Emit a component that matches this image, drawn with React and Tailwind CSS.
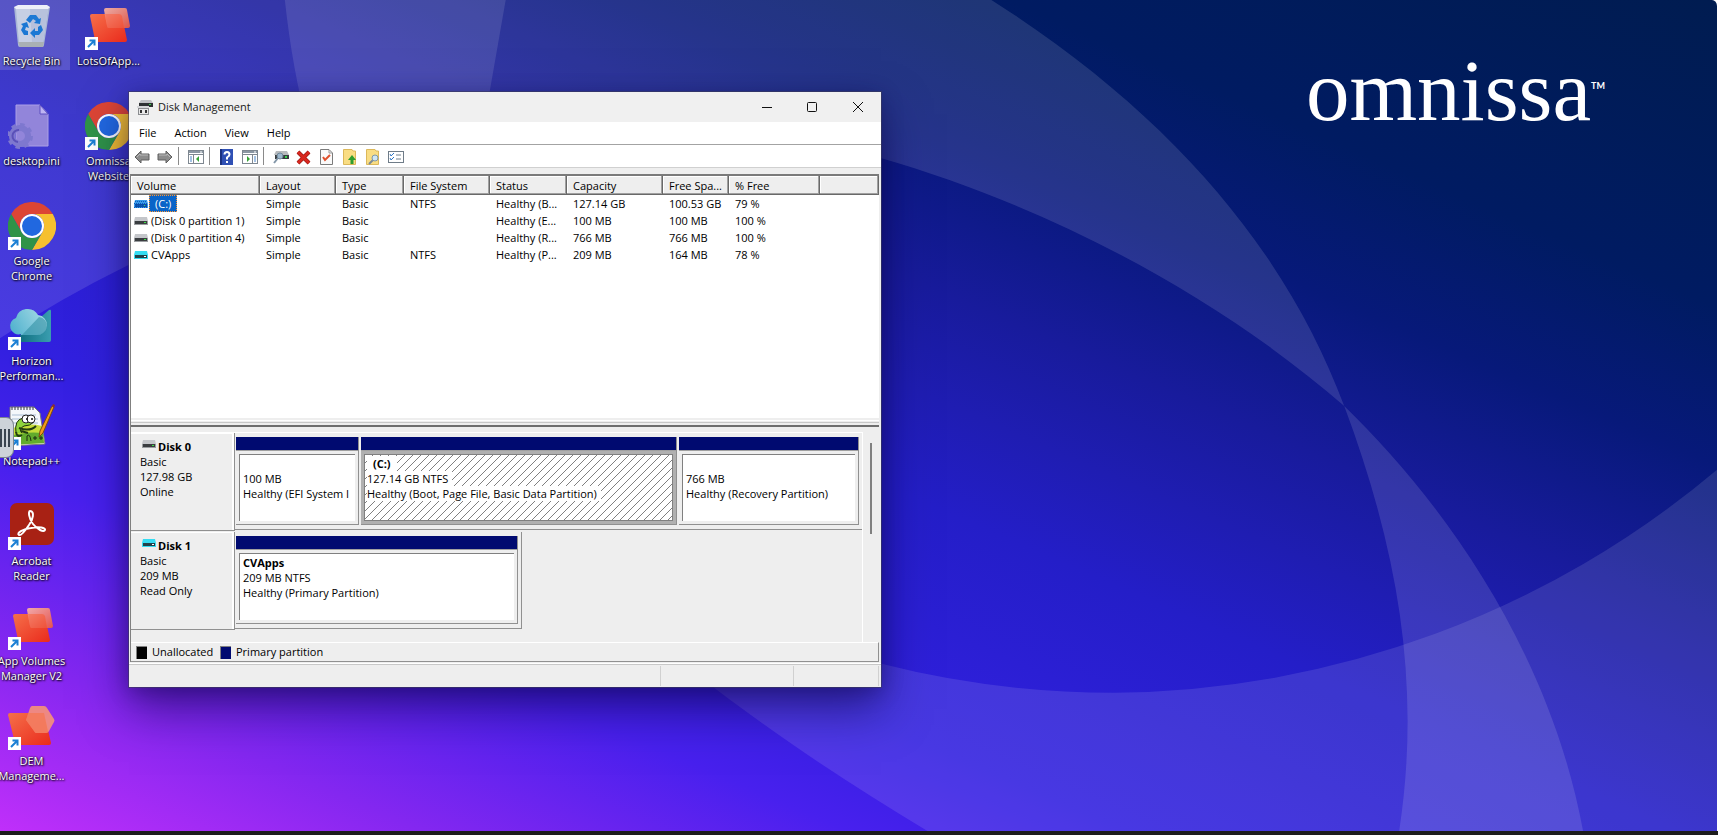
import { useState } from "react";

const volumes = [
  { name: "(C:)", icon: "hatched", fs: "NTFS", status: "Healthy (B...", capacity: "127.14 GB", free: "100.53 GB", pct: "79 %", selected: true },
  { name: "(Disk 0 partition 1)", icon: "gray", fs: "", status: "Healthy (E...", capacity: "100 MB", free: "100 MB", pct: "100 %" },
  { name: "(Disk 0 partition 4)", icon: "gray", fs: "", status: "Healthy (R...", capacity: "766 MB", free: "766 MB", pct: "100 %" },
  { name: "CVApps", icon: "cyan", fs: "NTFS", status: "Healthy (P...", capacity: "209 MB", free: "164 MB", pct: "78 %" },
];

const columns = [
  { label: "Volume", width: "w-[129px]" },
  { label: "Layout", width: "w-[76px]" },
  { label: "Type", width: "w-[68px]" },
  { label: "File System", width: "w-[86px]" },
  { label: "Status", width: "w-[77px]" },
  { label: "Capacity", width: "w-[96px]" },
  { label: "Free Spa...", width: "w-[66px]" },
  { label: "% Free", width: "w-[91px]" },
  { label: "", width: "" },
];

/* ---------- wallpaper ---------- */

function Wallpaper() {
  return (
    <svg
      className="absolute inset-0 h-full w-full"
      viewBox="0 0 1718 835"
      preserveAspectRatio="none"
      aria-hidden="true"
    >
      <defs>
        <linearGradient id="sky" gradientUnits="userSpaceOnUse" x1="0" y1="835" x2="582" y2="-504">
          <stop offset="0" stopColor="#c02ffa" />
          <stop offset="0.115" stopColor="#8427f0" />
          <stop offset="0.232" stopColor="#4820ee" />
          <stop offset="0.308" stopColor="#3220e0" />
          <stop offset="0.459" stopColor="#241ec8" />
          <stop offset="0.528" stopColor="#1f1db2" />
          <stop offset="0.597" stopColor="#181b9c" />
          <stop offset="0.7" stopColor="#07197a" />
          <stop offset="0.8" stopColor="#001b62" />
          <stop offset="1" stopColor="#001c50" />
        </linearGradient>
      </defs>
      <rect width="1718" height="835" fill="url(#sky)" />
      <path
        fill="#fff"
        fillOpacity="0.12"
        fillRule="evenodd"
        d="M0 0H992C1180 120 1290 260 1345 408S1422 690 1400 835H0Z
           M0 340Q60 300 129 266C380 110 640 80 882 159C1040 205 1210 290 1345 408C1440 500 1550 650 1584 835H0Z"
      />
      <path
        fill="#fff"
        fillOpacity="0.11"
        d="M285 0C320 330 520 590 928 835H1718V472A945 945 0 0 1 1115 696Q995 696 882 667C640 590 440 400 490 92L506 0Z"
      />
    </svg>
  );
}

/* ---------- desktop icons ---------- */

function ShortcutArrow() {
  return (
    <g>
      <rect x="0" y="35" width="13" height="13" fill="#fff" />
      <path d="M3 45L9 39M4.5 38.5H9.5V43.5" fill="none" stroke="#1a7fd4" strokeWidth="2" />
    </g>
  );
}

function RecycleBin() {
  return (
    <svg width="48" height="48" viewBox="0 0 48 48">
      <path d="M6 5L10 43Q10 45 12 45H34Q36 45 36 43L42 5Z" fill="#a9b6d6" />
      <path d="M8 7H40L35 40H11Z" fill="#c6cfe4" />
      <path d="M22 7H40L35 40H24Z" fill="#b7c1dc" />
      <path d="M6 5L10 3H39L42 5L40 7H8Z" fill="#eceff8" />
      <path d="M10 40H36L35 45H12Z" fill="#a9b0b4" />
      <g fill="#1c78d4">
        <path d="M18 18L22 13H28L31 17L33 16L32 22L26 21L28 19L25 17L22 21Z" />
        <path d="M33 23L35 28L31 33H27V36L22 31L27 26V29L30 29L30 25Z" />
        <path d="M20 33H16L13 28L15 24L13 22L19 20L21 26L18 25L17 28L20 29Z" />
      </g>
    </svg>
  );
}

function AppVolumes() {
  return (
    <svg width="48" height="48" viewBox="0 0 48 48">
      <defs>
        <linearGradient id="avBack" x1="0" y1="0" x2="1" y2="1">
          <stop offset="0" stopColor="#f5704a" />
          <stop offset="1" stopColor="#ea2a1c" />
        </linearGradient>
        <linearGradient id="avFront" x1="0" y1="0" x2="1" y2="1">
          <stop offset="0" stopColor="#ffb9a4" />
          <stop offset="1" stopColor="#f0573c" />
        </linearGradient>
      </defs>
      <path d="M7 12H34Q36 12 37 14L42 38Q42 40 40 40H13Q11 40 10 38L5 14Q5 12 7 12Z" fill="url(#avBack)" />
      <path d="M21 6H40Q42 6 42 8L45 24Q45 26 43 26H24Q22 26 22 24L19 8Q19 6 21 6Z" fill="url(#avFront)" fillOpacity="0.9" />
      <path d="M20 12H34Q36 12 37 14L39 26H24Q22 26 22 24Z" fill="#e93a26" fillOpacity="0.35" />
      <ShortcutArrow />
    </svg>
  );
}

function DemManagement() {
  return (
    <svg width="48" height="48" viewBox="0 0 48 48">
      <path d="M2 11H36L43 41Q43 43 41 43H10Q7 43 7 41L0 13Q0 11 2 11Z" fill="url(#avBack)" />
      <path d="M24 4H36Q38 4 39 6L46 17Q47 19 46 20L41 29Q40 31 38 31H28Q27 31 26 29L18 18L22 6Q23 4 24 4Z" fill="#f79277" fillOpacity="0.9" />
      <path d="M20 11H36L40 30L38 31H28Q27 31 26 29L18 18Z" fill="#f06a4c" fillOpacity="0.5" />
      <ShortcutArrow />
    </svg>
  );
}

function DesktopIni() {
  return (
    <svg width="48" height="48" viewBox="0 0 48 48">
      <path d="M8 3H32L40 12V44H8Z" fill="#9285da" stroke="#ab9fe6" />
      <path d="M32 3V12H40Z" fill="#beb4f2" stroke="#5c4fc0" />
      <g transform="translate(12 34)">
        <circle r="8" fill="none" stroke="#7e78cf" strokeWidth="6" />
        <circle r="11" fill="none" stroke="#7e78cf" strokeWidth="4" strokeDasharray="4.3 4.3" />
        <path d="M-1 -6A6 6 0 0 0 -2 6" fill="none" stroke="#5a50b8" strokeWidth="2" />
      </g>
    </svg>
  );
}

function Chrome() {
  return (
    <svg width="48" height="48" viewBox="0 0 48 48">
      <path d="M3.2 12A24 24 0 0 1 44.8 12H24A12 12 0 0 0 13.6 30Z" fill="#dc4535" />
      <path d="M44.8 12A24 24 0 0 1 24 48L34.4 30A12 12 0 0 0 24 12Z" fill="#f6c02f" />
      <path d="M24 48A24 24 0 0 1 3.2 12L13.6 30A12 12 0 0 0 34.4 30Z" fill="#2f9348" />
      <circle cx="24" cy="24" r="12" fill="#fff" />
      <circle cx="24" cy="24" r="10" fill="#2168e0" />
      <ShortcutArrow />
    </svg>
  );
}

function Horizon() {
  return (
    <svg width="48" height="48" viewBox="0 0 48 48">
      <defs>
        <linearGradient id="hzCloud" x1="0" y1="0.6" x2="1" y2="0.2">
          <stop offset="0" stopColor="#55b4cf" />
          <stop offset="1" stopColor="#a8dbe6" />
        </linearGradient>
        <linearGradient id="hzTri" x1="0" y1="0" x2="1" y2="0">
          <stop offset="0" stopColor="#0f6f80" />
          <stop offset="1" stopColor="#3a9eb0" />
        </linearGradient>
      </defs>
      <path d="M12 33L41 8Q43 7 43 9V38Q43 40 41 40H13Z" fill="url(#hzTri)" />
      <path d="M13 32A8 8 0 0 1 8 16A12 12 0 0 1 30 13A10 10 0 0 1 28 33H13Z" fill="url(#hzCloud)" />
      <path d="M14 33L31 15A9 9 0 0 1 29 33Z" fill="#2a8b9e" fillOpacity="0.55" />
      <ShortcutArrow />
    </svg>
  );
}

function NotepadPP() {
  return (
    <svg width="48" height="48" viewBox="0 0 48 48">
      <path d="M2 5H26L32 11L37 42L2 44Z" fill="#f4f7fb" stroke="#777" />
      <path d="M4 5V8M7 5V8M10 5V8M13 5V8M16 5V8M19 5V8M22 5V8M25 5V8" stroke="#334" />
      <path d="M4 13H28M4 17H30M4 21H30" stroke="#a9bdd4" />
      <path d="M3 27Q18 20 34 24L36 41L3 43Z" fill="#c6dc3a" />
      <path d="M3 34Q18 29 35 31L36 41L3 43Z" fill="#62aa2d" />
      <path d="M8 31Q6 18 15 16Q21 14 26 20Q22 24 16 24Q10 27 14 31" fill="#8ed33c" stroke="#1c3208" />
      <path d="M11 26Q22 30 28 24M13 29L20 31M8 30Q9 36 14 33" fill="none" stroke="#233d10" strokeWidth="2" />
      <circle cx="18" cy="17" r="4" fill="#fff" stroke="#222" />
      <circle cx="23" cy="17" r="4" fill="#fff" stroke="#222" />
      <circle cx="19" cy="17" r="1" fill="#111" />
      <circle cx="24" cy="17" r="1" fill="#111" />
      <path d="M19 39V34Q22 31 23 39M25 36H29M27 34V38M31 36H35M33 34V38" fill="none" stroke="#1b2c10" />
      <path d="M31 35L32 29L44 4L46 5L35 31Z" fill="#f09a1c" stroke="#7c4a10" />
      <path d="M44 4L45 2L47 3L46 6Z" fill="#8c2f30" />
      <ShortcutArrow />
    </svg>
  );
}

function Acrobat() {
  return (
    <svg width="48" height="48" viewBox="0 0 48 48">
      <rect x="2" y="1" width="44" height="42" rx="7" fill="#a82114" />
      <path
        d="M22 9C27 9 25 18 21 23C17 29 13 34 11 33C8 31 15 27 23 26C31 24 38 26 37 28C36 31 29 27 25 22C21 17 20 9 22 9Z"
        fill="none"
        stroke="#fff"
        strokeWidth="2"
      />
      <ShortcutArrow />
    </svg>
  );
}

function DesktopItem({ icon, lines, active }) {
  return (
    <button className="flex h-[100px] w-[77px] flex-col items-center text-[11px] leading-[15px] text-white [text-shadow:1px_1px_2px_#000,0_0_2px_#000]">
      <span
        className={
          active
            ? "flex h-[70px] w-full flex-col items-center bg-white/15 pt-[2px]"
            : "flex w-full flex-col items-center pt-[2px]"
        }
      >
        {icon}
        <span className="pt-[3px]">
          {lines.map((line) => (
            <span key={line} className="block whitespace-nowrap">
              {line}
            </span>
          ))}
        </span>
      </span>
    </button>
  );
}

/* ---------- disk management window ---------- */

function DriveIcon({ kind = "gray" }) {
  const top = { gray: "#c4c6ca", cyan: "#35dcf2", hatched: "#3a9be8" }[kind];
  const body = { gray: "#3a3d40", cyan: "#22414a", hatched: "#0c4ea6" }[kind];
  return (
    <svg width="14" height="8" viewBox="0 0 14 8" className="shrink-0" aria-hidden="true">
      <path d="M1 0H13L14 4H0Z" fill={top} />
      <rect y="4" width="14" height="4" fill={kind === "gray" ? "#9a9da0" : top} />
      <rect x="1" y="4" width="12" height="3" fill={body} />
      <rect x="10" y="5" width="2" height="1" fill={kind === "cyan" ? "#fff" : "#3ee04a"} />
      {kind === "hatched" && (
        <path d="M1 1.5H13M0 3.5H14M1 5.5H13M0 7.5H14" stroke="#0a5cc0" strokeDasharray="1 1" />
      )}
    </svg>
  );
}

function AppIcon() {
  return (
    <svg width="16" height="15" viewBox="0 0 16 15" aria-hidden="true">
      <path d="M4 0H14L16 3H2Z" fill="#bfc1c4" />
      <rect x="2" y="3" width="14" height="4" fill="#2e3133" />
      <rect x="12" y="4" width="2" height="1" fill="#35d34a" />
      <rect x="1" y="7" width="11" height="8" fill="#8b8d90" />
      <rect x="0" y="6" width="12" height="2" fill="#d5d6d8" />
      <rect x="2" y="9" width="9" height="5" fill="#e8e8e8" />
      <rect x="3" y="10" width="2" height="3" fill="#333" />
      <rect x="8" y="10" width="2" height="3" fill="#333" />
    </svg>
  );
}

function Arrow({ flip }) {
  return (
    <svg width="16" height="14" viewBox="0 0 16 14" className={flip ? "-scale-x-100" : ""}>
      <path d="M1 7L7 1V4H15V10H7V13Z" fill="#8c8c8c" stroke="#5e5e5e" />
      <path d="M3 7L6 4V5H14" fill="none" stroke="#b9b9b9" />
    </svg>
  );
}

function PaneIcon({ flip }) {
  return (
    <svg width="16" height="14" viewBox="0 0 16 14">
      <rect x="0.5" y="0.5" width="15" height="13" fill="#fff" stroke="#7e8790" />
      <path d="M1 2H15" stroke="#8b97a3" strokeWidth="2" />
      <path d="M12 2H14" stroke="#fff" />
      <path d="M1 4.5H15" stroke="#7e8790" />
      <path d={flip ? "M10.5 5V13" : "M5.5 5V13"} stroke="#7e8790" />
      <path d={flip ? "M12 7H14M12 9H14M12 11H14" : "M2 7H4M2 9H4M2 11H4"} stroke="#4a86c8" />
      <path d={flip ? "M5 6V12L8 9Z" : "M11 6V12L8 9Z"} fill="#35a335" />
    </svg>
  );
}

function HelpIcon() {
  return (
    <svg width="13" height="16" viewBox="0 0 13 16">
      <rect width="13" height="16" fill="#2f50b4" />
      <rect width="2" height="16" fill="#1b3180" />
      <path d="M4.5 5.5Q4.5 3 7 3T9.5 5.5Q9.5 7 7 8.5V10.5" fill="none" stroke="#fff" strokeWidth="2" />
      <rect x="6" y="12" width="2" height="2" fill="#fff" />
    </svg>
  );
}

function RescanIcon() {
  return (
    <svg width="16" height="14" viewBox="0 0 16 14">
      <path d="M3 1H14L16 5H1Z" fill="#b7babd" />
      <rect x="2" y="5" width="14" height="4" fill="#373b3e" />
      <rect x="12" y="6" width="2" height="2" fill="#36d44b" />
      <path d="M5 8L1 13" stroke="#8296a8" strokeWidth="2" />
      <circle cx="7" cy="6" r="3" fill="#9db7cc" stroke="#6f8799" />
    </svg>
  );
}

function DeleteIcon() {
  return (
    <svg width="15" height="15" viewBox="0 0 15 15">
      <path d="M2 2L13 13M13 2L2 13" stroke="#8f1410" strokeWidth="4" />
      <path d="M2 2L13 13M13 2L2 13" stroke="#d8281f" strokeWidth="3" />
    </svg>
  );
}

function CheckDocIcon() {
  return (
    <svg width="13" height="16" viewBox="0 0 13 16">
      <path d="M0.5 0.5H9L12.5 4V15.5H0.5Z" fill="#fafafa" stroke="#7b7b7b" />
      <path d="M9 1V4H12" fill="none" stroke="#9b9b9b" />
      <path d="M3 8L5 11L10 6" fill="none" stroke="#e0502c" strokeWidth="2" />
    </svg>
  );
}

function FolderIcon({ search }) {
  return (
    <svg width="14" height="16" viewBox="0 0 14 16">
      <path d="M0.5 0.5H9L10 2H12.5V15.5H0.5Z" fill="#f9dd83" stroke="#dcb85a" />
      {search ? (
        <>
          <path d="M7 11L3 15" stroke="#7c8a96" strokeWidth="2" />
          <circle cx="9" cy="9" r="3" fill="#cfe6f5" stroke="#7f98a8" />
        </>
      ) : (
        <path d="M9 6L13 11H10.5V15H7.5V11H5Z" fill="#2e9e2e" />
      )}
    </svg>
  );
}

function ChecklistIcon() {
  return (
    <svg width="16" height="12" viewBox="0 0 16 12">
      <rect x="0.5" y="0.5" width="15" height="11" fill="#fff" stroke="#6f7c88" />
      <path d="M2 3L3 5L6 2M2 7L3 9L6 6" fill="none" stroke="#2f76c4" />
      <path d="M8 4H13M8 8H13" stroke="#70808e" />
    </svg>
  );
}

function ToolButton({ label, children }) {
  return (
    <button aria-label={label} className="flex h-[22px] w-[23px] items-center justify-center pt-[2px]">
      {children}
    </button>
  );
}

function Separator() {
  return <span className="mr-[5px] ml-[2px] h-[18px] w-px bg-[#8a8a8a]" />;
}

function TitleBar() {
  return (
    <header className="flex h-[30px] items-center bg-[#f0f0f0] pl-2">
      <AppIcon />
      <h1 className="grow pl-[5px] text-[#1a1a1a]">Disk Management</h1>
      <div className="flex h-full pb-px">
        <button aria-label="Minimize" className="flex w-[45px] items-center justify-center">
          <svg width="10" height="10" viewBox="0 0 10 10">
            <path d="M0 5.5H10" stroke="#111" />
          </svg>
        </button>
        <button aria-label="Maximize" className="flex w-[46px] items-center justify-center">
          <svg width="10" height="10" viewBox="0 0 10 10">
            <rect x="0.5" y="0.5" width="9" height="9" rx="1" fill="none" stroke="#111" />
          </svg>
        </button>
        <button aria-label="Close" className="flex w-[46px] items-center justify-center">
          <svg width="10" height="10" viewBox="0 0 10 10">
            <path d="M0 0L10 10M10 0L0 10" stroke="#111" />
          </svg>
        </button>
      </div>
    </header>
  );
}

function MenuBar() {
  return (
    <nav className="flex h-[23px] items-center gap-[18px] border-b border-[#a3a3a3] bg-white pl-[10px]">
      {["File", "Action", "View", "Help"].map((item) => (
        <button key={item}>{item}</button>
      ))}
    </nav>
  );
}

function ToolBar() {
  return (
    <div className="flex h-[23px] items-center border-b border-[#d0d0d0] bg-white pl-px">
      <ToolButton label="Back"><Arrow /></ToolButton>
      <ToolButton label="Forward"><Arrow flip /></ToolButton>
      <Separator />
      <ToolButton label="Console tree"><PaneIcon /></ToolButton>
      <Separator />
      <ToolButton label="Help"><HelpIcon /></ToolButton>
      <ToolButton label="Action pane"><PaneIcon flip /></ToolButton>
      <Separator />
      <ToolButton label="Rescan"><RescanIcon /></ToolButton>
      <ToolButton label="Delete"><DeleteIcon /></ToolButton>
      <ToolButton label="Properties"><CheckDocIcon /></ToolButton>
      <ToolButton label="Open"><FolderIcon /></ToolButton>
      <ToolButton label="Explore"><FolderIcon search /></ToolButton>
      <ToolButton label="Settings"><ChecklistIcon /></ToolButton>
    </div>
  );
}

function VolumeTable() {
  return (
    <div className="mt-[6px] h-[244px] border-t-2 border-[#7a7a7a] bg-white">
      <table className="w-full table-fixed border-collapse text-left">
        <thead>
          <tr>
            {columns.map((col) => (
              <th
                key={col.label || "rest"}
                className={`${col.width} h-[19px] bg-[#eee] p-0 pl-[6px] font-normal leading-[17px] shadow-[inset_-1px_-1px_0_#696969,inset_-2px_-2px_0_#a0a0a0,inset_1px_1px_0_#fff]`}
              >
                {col.label}
              </th>
            ))}
          </tr>
        </thead>
        <tbody>
          {volumes.map((v) => (
            <tr key={v.name} className="h-[17px] leading-[17px] whitespace-nowrap">
              <td className="p-0">
                <span className="flex items-center pl-[3px]">
                  <DriveIcon kind={v.icon} />
                  {v.selected ? (
                    <span className="ml-px h-[17px] border border-dotted border-[#ff9632] bg-[#0a64c8] px-[5px] leading-[15px] text-white">
                      {v.name}
                    </span>
                  ) : (
                    <span className="pl-[3px]">{v.name}</span>
                  )}
                </span>
              </td>
              <td className="p-0 pl-[6px]">Simple</td>
              <td className="p-0 pl-[6px]">Basic</td>
              <td className="p-0 pl-[6px]">{v.fs}</td>
              <td className="p-0 pl-[6px]">{v.status}</td>
              <td className="p-0 pl-[6px]">{v.capacity}</td>
              <td className="p-0 pl-[6px]">{v.free}</td>
              <td className="p-0 pl-[6px]">{v.pct}</td>
              <td className="p-0" />
            </tr>
          ))}
        </tbody>
      </table>
    </div>
  );
}

function DiskLabel({ name, size, state, kind }) {
  return (
    <div className="h-[98px] w-[104px] shrink-0 border-r border-b border-[#909090] pt-[6px] pl-[9px] leading-[15px] shadow-[inset_0_1px_0_#fff,inset_-2px_0_0_#fff]">
      <div className="flex items-center gap-[2px] pl-[2px] font-bold">
        <span className="pb-[6px]">
          <DriveIcon kind={kind} />
        </span>
        {name}
      </div>
      <div>Basic</div>
      <div>{size}</div>
      <div>{state}</div>
    </div>
  );
}

function Partition({ width, title, size, status, selected, onSelect }) {
  return (
    <button
      onClick={onSelect}
      className={`${width} flex h-[88px] flex-col border-r border-b border-[#909090] text-left`}
    >
      <span className="h-[14px] w-full border-b border-[#a0a0a0] bg-[#000a70]" />
      <span className={selected ? "flex w-full grow bg-[#b0b0b0] p-[3px]" : "flex w-full grow bg-[#eee] p-[3px]"}>
        <span
          className={`flex w-full flex-col items-start overflow-hidden border-t border-l border-[#808080] pt-px leading-[15px] whitespace-nowrap ${
            selected
              ? "border-r border-b bg-white bg-[linear-gradient(135deg,transparent_45%,#808080_45%,#808080_55%,transparent_55%)] bg-[length:8px_8px] pl-[2px]"
              : "bg-white pl-[3px]"
          }`}
        >
          <span className={selected ? "h-[15px] bg-white px-[6px] font-bold" : "h-[15px] font-bold"}>{title}</span>
          <span className="bg-white pr-1">{size}</span>
          <span className="bg-white pr-1">{status}</span>
        </span>
      </span>
    </button>
  );
}

function DiskMap() {
  const [selected, setSelected] = useState("c");
  return (
    <div className="flex h-[215px] pt-[5px]">
      <div className="grow border-t border-r border-white">
        <div className="flex h-[99px]">
          <DiskLabel name="Disk 0" size="127.98 GB" state="Online" kind="gray" />
          <div className="flex h-[97px] grow gap-[2px] border-b border-[#909090] pt-1 pr-[3px] pl-px">
            <Partition
              width="w-[123px]"
              size="100 MB"
              status="Healthy (EFI System I"
              selected={selected === "efi"}
              onSelect={() => setSelected("efi")}
            />
            <Partition
              width="grow"
              title="(C:)"
              size="127.14 GB NTFS"
              status="Healthy (Boot, Page File, Basic Data Partition)"
              selected={selected === "c"}
              onSelect={() => setSelected("c")}
            />
            <Partition
              width="w-[180px]"
              size="766 MB"
              status="Healthy (Recovery Partition)"
              selected={selected === "recovery"}
              onSelect={() => setSelected("recovery")}
            />
          </div>
        </div>
        <div className="flex h-[99px]">
          <DiskLabel name="Disk 1" size="209 MB" state="Read Only" kind="cyan" />
          <div className="h-[97px] border-r border-b border-[#909090] pt-1 pr-[3px] pl-px">
            <Partition
              width="w-[282px]"
              title="CVApps"
              size="209 MB NTFS"
              status="Healthy (Primary Partition)"
              selected={selected === "cvapps"}
              onSelect={() => setSelected("cvapps")}
            />
          </div>
        </div>
      </div>
      <div className="w-[16px] pt-[11px] pl-[7px]">
        <div className="h-[91px] w-[2px] bg-[#808080]" />
      </div>
    </div>
  );
}

function Legend() {
  return (
    <div className="flex h-[20px] items-center border-t border-r border-b border-t-white border-r-[#909090] border-b-[#909090] pl-[5px]">
      <span className="h-[13px] w-[11px] border-t border-l border-[#808080] bg-black" />
      <span className="w-[73px] pl-[5px]">Unallocated</span>
      <span className="h-[13px] w-[11px] border-t border-l border-[#808080] bg-[#000a70]" />
      <span className="pl-[5px]">Primary partition</span>
    </div>
  );
}

function DiskManagement() {
  return (
    <section className="absolute top-[92px] left-[129px] w-[752px] bg-[#eee] text-[11px] text-black shadow-[0_0_0_1px_rgba(60,60,90,0.6),0_22px_44px_rgba(10,0,60,0.5),0_4px_20px_rgba(10,0,60,0.3)]">
      <TitleBar />
      <MenuBar />
      <ToolBar />
      <div className="mr-[2px] ml-px border-l border-[#808080]">
        <VolumeTable />
        <div className="h-[7px] border-b-2 border-[#6e6e6e]">
          <div className="mt-[2px] h-[3px] border-t border-b border-t-white border-b-[#c8c8c8]" />
        </div>
        <DiskMap />
        <Legend />
      </div>
      <footer className="mt-[2px] flex h-[23px] border-t border-[#c8c8c8] bg-[#eee] pt-px pr-[2px] pb-px shadow-[0_-1px_0_#fff]">
        <div className="grow border-r border-[#d0d0d0]" />
        <div className="w-[133px] border-r border-[#d0d0d0]" />
        <div className="w-[85px] border-r border-[#d0d0d0]" />
      </footer>
    </section>
  );
}

export default function App() {
  return (
    <div className="flex min-h-screen flex-col overflow-hidden bg-white font-['Open_Sans','Noto_Sans',sans-serif]">
      <main className="relative grow overflow-hidden rounded-tr-md border-r border-white">
        <Wallpaper />
        <div className="relative -ml-[7px] flex">
          <div className="flex flex-col">
            <DesktopItem icon={<RecycleBin />} lines={["Recycle Bin"]} active />
            <DesktopItem icon={<DesktopIni />} lines={["desktop.ini"]} />
            <DesktopItem icon={<Chrome />} lines={["Google", "Chrome"]} />
            <DesktopItem icon={<Horizon />} lines={["Horizon", "Performan..."]} />
            <DesktopItem icon={<NotepadPP />} lines={["Notepad++"]} />
            <DesktopItem icon={<Acrobat />} lines={["Acrobat", "Reader"]} />
            <DesktopItem icon={<AppVolumes />} lines={["App Volumes", "Manager V2"]} />
            <DesktopItem icon={<DemManagement />} lines={["DEM", "Manageme..."]} />
          </div>
          <div className="flex flex-col">
            <DesktopItem icon={<AppVolumes />} lines={["LotsOfApp..."]} />
            <DesktopItem icon={<Chrome />} lines={["Omnissa", "Website"]} />
          </div>
        </div>
        <div className="absolute top-[417px] left-0 flex h-[41px] w-[14px] items-center gap-[2px] rounded-r-lg border border-l-0 border-[#7d868f] bg-[#cdd3d9]">
          <span className="h-[18px] w-[2px] bg-[#3a4550]" />
          <span className="h-[18px] w-[2px] bg-[#3a4550]" />
          <span className="h-[18px] w-[2px] bg-[#3a4550]" />
        </div>
        <div className="absolute top-[49px] right-[112px] flex items-start text-white">
          <span className="font-['Liberation_Serif',serif] text-[87px] leading-[84px]">omnissa</span>
          <span className="pt-[30px] font-['Lato',sans-serif] text-[9px] font-bold">TM</span>
        </div>
        <DiskManagement />
      </main>
      <div className="h-1 bg-[#1c1c1c]" />
    </div>
  );
}
